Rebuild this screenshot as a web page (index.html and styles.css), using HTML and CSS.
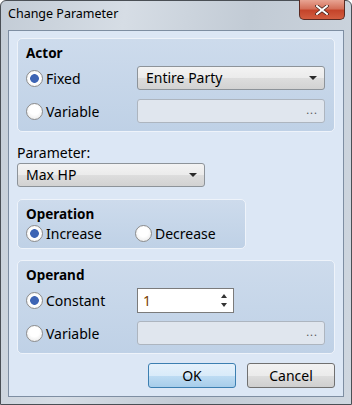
FILE: index.html
```html
<!DOCTYPE html>
<html lang="en">
<head>
    <meta charset="UTF-8">
    <title>Change Parameter</title>
    <link rel="stylesheet" href="styles.css">
</head>
<body>
    <div class="window">
        <div class="titlebar">
            <span class="title">Change Parameter</span>
            <button class="close-btn">
                <svg width="14" height="10" viewBox="0 0 14 10">
                    <path d="M2 1 L12 9 M12 1 L2 9" stroke="#3a1a14" stroke-width="3.4" stroke-linecap="square"/>
                    <path d="M2 1 L12 9 M12 1 L2 9" stroke="#ffffff" stroke-width="2" stroke-linecap="square"/>
                </svg>
            </button>
        </div>

        <div class="client">
            <div class="group group-actor">
                <div class="group-title">Actor</div>
                <div class="row">
                    <label class="radio checked">Fixed</label>
                    <div class="select wide">Entire Party<span class="arrow"></span></div>
                </div>
                <div class="row">
                    <label class="radio">Variable</label>
                    <div class="picker wide"><span class="dots">...</span></div>
                </div>
            </div>

            <div class="field-label">Parameter:</div>
            <div class="select param">Max HP<span class="arrow"></span></div>

            <div class="group group-op">
                <div class="group-title">Operation</div>
                <div class="op-row">
                    <label class="radio checked op-first">Increase</label>
                    <label class="radio">Decrease</label>
                </div>
            </div>

            <div class="group group-operand">
                <div class="group-title">Operand</div>
                <div class="row">
                    <label class="radio checked">Constant</label>
                    <div class="spin">
                        <span class="spin-value">1</span>
                        <span class="spin-arrows">
                            <span class="up"></span>
                            <span class="down"></span>
                        </span>
                    </div>
                </div>
                <div class="row">
                    <label class="radio">Variable</label>
                    <div class="picker wide"><span class="dots">...</span></div>
                </div>
            </div>

            <div class="buttons">
                <button class="btn btn-default">OK</button>
                <button class="btn">Cancel</button>
            </div>
        </div>
    </div>
</body>
</html>
```

FILE: styles.css
```css
body {
    margin: 0;
    font-family: "Noto Sans", "DejaVu Sans", sans-serif;
    font-size: 14px;
    color: #000;
    background: #fff;
}
.window {
    width: 352px;
    height: 405px;
    box-sizing: border-box;
    border: 1px solid #4a4f55;
    border-radius: 6px 6px 0 0;
    background: linear-gradient(100deg, #c3ccd6 0%, #d6dde5 30%, #c2cbd5 60%, #cfd7e0 100%);
    display: flex;
    flex-direction: column;
}
.titlebar {
    height: 29px;
    position: relative;
    display: flex;
    align-items: flex-start;
}
.title {
    margin: 4px 0 0 7px;
    font-size: 12.5px;
    color: #000;
}
.close-btn {
    position: absolute;
    right: 6px;
    top: -1px;
    width: 46px;
    height: 20px;
    border: 1px solid #5a2a22;
    border-top: none;
    border-radius: 0 0 5px 5px;
    background: linear-gradient(#e8a493 0%, #d4705a 45%, #c4442a 55%, #d25d40 100%);
    display: flex;
    align-items: center;
    justify-content: center;
    padding: 0;
}
.client {
    margin: 0 7px 7px 7px;
    flex: 1;
    border: 1px solid #7e8ea2;
    background: #dce7f5;
    padding: 7px 8px 0 8px;
    display: flex;
    flex-direction: column;
}
.group {
    border: 1px solid #eef3fa;
    border-radius: 5px;
    background: linear-gradient(#cddbec, #bfd1e6);
    box-sizing: border-box;
    padding: 4px 9px 0 8px;
}
.group-title {
    font-weight: bold;
    font-size: 13.5px;
    height: 20px;
    line-height: 20px;
}
.group-actor {
    height: 94px;
}
.group-op {
    width: 229px;
    height: 50px;
    margin-top: 12px;
}
.group-operand {
    height: 94px;
    margin-top: 11px;
}
.row {
    display: flex;
    align-items: center;
    justify-content: space-between;
    height: 24px;
    margin-top: 3px;
}
.row + .row {
    margin-top: 9px;
}
.radio {
    display: flex;
    align-items: center;
    gap: 3px;
}
.radio::before {
    content: "";
    width: 15px;
    height: 15px;
    border: 1px solid #8c8c8c;
    border-radius: 50%;
    background: radial-gradient(circle at 50% 40%, #ffffff 40%, #e3e3e3 100%);
    box-sizing: content-box;
}
.radio.checked::before {
    background: radial-gradient(circle, #3d64b4 0, #3d64b4 4px, #ffffff 4.7px, #f0f0f0 100%);
}
.op-row {
    display: flex;
    align-items: center;
    height: 22px;
    margin-top: -2px;
}
.op-first {
    width: 109px;
}
.select {
    box-sizing: border-box;
    height: 24px;
    border: 1px solid #8d9399;
    border-radius: 3px;
    background: linear-gradient(#f3f3f3 0%, #ebebeb 50%, #dddddd 51%, #d2d2d2 100%);
    padding: 0 8px;
    line-height: 22px;
    position: relative;
}
.arrow {
    position: absolute;
    right: 7px;
    top: 9px;
    border-left: 4px solid transparent;
    border-right: 4px solid transparent;
    border-top: 4px solid #2a2a2a;
}
.wide {
    width: 188px;
}
.param {
    width: 188px;
    margin-top: 0;
}
.picker {
    box-sizing: border-box;
    height: 24px;
    border: 1px solid #adb5bf;
    border-radius: 3px;
    background: #e0e6ee;
    position: relative;
}
.dots {
    position: absolute;
    right: 6px;
    top: 2px;
    font-size: 11px;
    color: #555;
    letter-spacing: 1px;
}
.field-label {
    margin-top: 12px;
    height: 19px;
    line-height: 18px;
}
.spin {
    box-sizing: border-box;
    width: 97px;
    height: 25px;
    border: 1px solid #7b7b7b;
    background: #fff;
    margin-right: 91px;
    display: flex;
    align-items: center;
    justify-content: space-between;
    padding: 0 6px 0 5px;
}
.spin-value {
    color: #7a3d00;
}
.spin-arrows {
    display: flex;
    flex-direction: column;
    gap: 5px;
}
.spin-arrows .up {
    border-left: 3px solid transparent;
    border-right: 3px solid transparent;
    border-bottom: 4px solid #333;
}
.spin-arrows .down {
    border-left: 3px solid transparent;
    border-right: 3px solid transparent;
    border-top: 4px solid #333;
}
.buttons {
    display: flex;
    justify-content: flex-end;
    gap: 11px;
    margin-top: 9px;
    padding-right: 0;
}
.btn {
    width: 88px;
    height: 25px;
    border: 1px solid #707070;
    border-radius: 3px;
    background: linear-gradient(#f2f2f2 0%, #ebebeb 50%, #dddddd 51%, #cfcfcf 100%);
    font-family: "Noto Sans", "DejaVu Sans", sans-serif;
    font-size: 14px;
    padding: 0;
}
.btn-default {
    border-color: #3c7fb1;
    background: linear-gradient(#e5f1fb 0%, #d9ebf9 50%, #bedcf3 51%, #a7cdea 100%);
}
```
